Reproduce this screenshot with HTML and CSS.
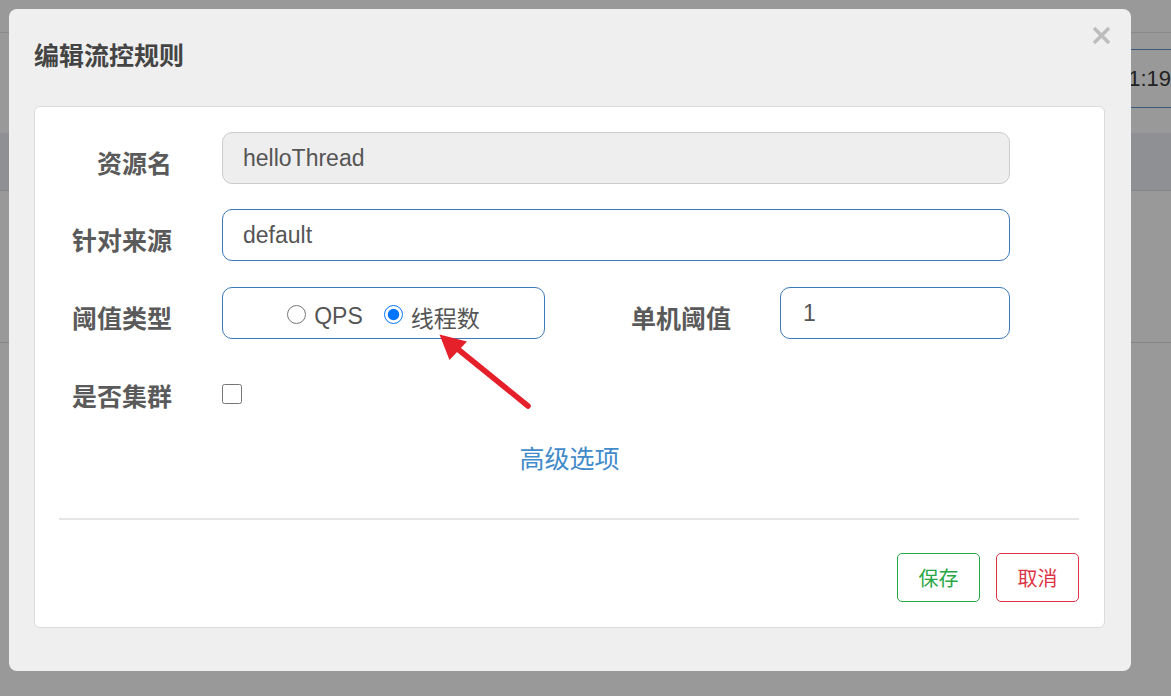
FILE: index.html
```html
<!DOCTYPE html>
<html lang="zh">
<head>
<meta charset="utf-8">
<title>编辑流控规则</title>
<link rel="stylesheet" href="styles.css">
</head>
<body>
<div class="page">
  <div class="bg-top"></div>
  <div class="bg-bar"><div class="bg-time">2021-11-11 11:11:19</div></div>
  <div class="bg-dark"></div>
  <div class="bg-row"></div>
</div>

<div class="modal">
  <div class="modal-header">
    <h4 class="modal-title">编辑流控规则</h4>
    <button class="close" type="button" aria-label="关闭">
      <svg width="19" height="19" viewBox="0 0 19 19"><path d="M2 2 L17 17 M17 2 L2 17" stroke="#bdbdbd" stroke-width="3.6" stroke-linecap="butt" fill="none"/></svg>
    </button>
  </div>
  <div class="panel">
    <div class="form-row">
      <label class="form-label">资源名</label>
      <div class="field wide disabled">helloThread</div>
    </div>
    <div class="form-row row2">
      <label class="form-label">针对来源</label>
      <div class="field wide">default</div>
    </div>
    <div class="form-row row3">
      <label class="form-label">阈值类型</label>
      <div class="field radio-box">
        <label class="radio"><input type="radio" name="grade"><span>QPS</span></label>
        <label class="radio"><input type="radio" name="grade" checked><span>线程数</span></label>
      </div>
      <label class="form-label label2">单机阈值</label>
      <div class="field small">1</div>
    </div>
    <div class="form-row row4">
      <label class="form-label">是否集群</label>
      <input class="check" type="checkbox">
    </div>
    <div class="advanced"><a href="#">高级选项</a></div>
    <div class="divider"></div>
    <div class="actions">
      <button class="btn btn-save" type="button">保存</button>
      <button class="btn btn-cancel" type="button">取消</button>
    </div>
  </div>
</div>

<svg class="annot-arrow" width="110" height="90" viewBox="0 0 110 90">
  <line x1="24" y1="21" x2="98" y2="81" stroke="#e6202a" stroke-width="5.5" stroke-linecap="round"/>
  <polygon points="9.5,9.5 19.5,35 37,16.5" fill="#e6202a"/>
</svg>
</body>
</html>
```

FILE: styles.css
```css
* { box-sizing: border-box; }

html, body {
  margin: 0;
  padding: 0;
}

body {
  width: 1171px;
  height: 696px;
  overflow: hidden;
  background: #999999;
  position: relative;
  font-family: "Liberation Sans", "Noto Sans CJK SC", sans-serif;
}

/* dimmed page behind the modal */
.page {
  display: flex;
  flex-direction: column;
}
.bg-top {
  height: 33px;
  border-bottom: 1px solid #8a8a8a;
}
.bg-bar {
  margin-top: 16px;
  display: flex;
  justify-content: flex-end;
}
.bg-time {
  width: 320px;
  height: 59px;
  border-top: 1px solid #3a5a80;
  border-bottom: 1px solid #3a5a80;
  display: flex;
  align-items: center;
  justify-content: flex-end;
  font-size: 22px;
  color: #222;
  white-space: nowrap;
}
.bg-dark {
  margin-top: 25px;
  height: 58px;
  background: #8f9093;
  border-bottom: 1px solid #858585;
}
.bg-row {
  height: 152px;
  border-bottom: 1px solid #858585;
}

/* modal */
.modal {
  position: absolute;
  left: 9px;
  top: 9px;
  width: 1122px;
  height: 662px;
  background: #efefef;
  border-radius: 8px;
  font-family: "Liberation Sans", "Noto Sans CJK SC", sans-serif;
}
.modal-header {
  height: 97px;
  padding: 26px 25px 0 25px;
  position: relative;
}
.modal-title {
  margin: 0;
  font-family: "Noto Sans CJK SC", sans-serif;
  font-size: 25px;
  line-height: 38px;
  font-weight: 700;
  color: #444444;
}
.close {
  position: absolute;
  right: 20px;
  top: 17px;
  width: 19px;
  height: 19px;
  padding: 0;
  border: 0;
  background: transparent;
  display: block;
}
.close svg { display: block; }

.panel {
  margin: 0 26px 0 25px;
  height: 522px;
  background: #ffffff;
  border: 1px solid #dcdcdc;
  border-radius: 6px;
  padding-top: 25px;
}

.form-row {
  display: flex;
  height: 52px;
  margin-bottom: 25px;
}
.form-row.row2,
.form-row.row3 { margin-bottom: 26px; }
.form-row.row4 { margin-bottom: 0; }

.form-label {
  width: 137px;
  flex: none;
  text-align: right;
  padding-top: 15px;
  font-family: "Noto Sans CJK SC", sans-serif;
  font-size: 25px;
  line-height: 30px;
  font-weight: 700;
  color: #5a5a5a;
  margin-right: 50px;
  white-space: nowrap;
}
.form-label.label2 {
  width: 186px;
  margin-right: 49px;
}

.field {
  height: 52px;
  border: 1px solid #3d79b9;
  border-radius: 10px;
  background: #fff;
  display: flex;
  align-items: center;
  padding-left: 20px;
  font-size: 23px;
  color: #555;
}
.field.wide { width: 788px; }
.field.disabled {
  background: #eeeeee;
  border-color: #cccccc;
}
.field.small {
  width: 230px;
  padding-left: 22px;
}

.radio-box {
  width: 323px;
  justify-content: center;
  padding-left: 0;
  padding-top: 7px;
  gap: 21px;
}
.radio {
  display: flex;
  align-items: center;
  gap: 8px;
  font-size: 23px;
  color: #555;
}
.radio span {
  font-family: "Liberation Sans", "Noto Sans CJK SC", sans-serif;
}
.radio input {
  width: 19px;
  height: 19px;
  margin: 0;
  margin-top: -5px;
}

.check {
  width: 20px;
  height: 20px;
  margin: 19px 0 0 0;
}

.advanced {
  margin-top: 22px;
  text-align: center;
  line-height: 36px;
  font-family: "Noto Sans CJK SC", sans-serif;
  font-size: 25px;
}
.advanced a {
  color: #428bca;
  text-decoration: none;
}

.divider {
  margin: 43px 25px 0 24px;
  height: 2px;
  background: #e5e5e5;
}

.actions {
  margin-top: 33px;
  padding-right: 25px;
  display: flex;
  justify-content: flex-end;
  gap: 16px;
}
.btn {
  width: 83px;
  height: 49px;
  border-radius: 5px;
  background: #fff;
  font-family: "Noto Sans CJK SC", sans-serif;
  font-size: 20px;
  padding: 0;
}
.btn-save {
  border: 1px solid #28a745;
  color: #28a745;
}
.btn-cancel {
  border: 1px solid #dc3545;
  color: #dc3545;
}

.annot-arrow {
  position: absolute;
  left: 430px;
  top: 325px;
  pointer-events: none;
}
```
